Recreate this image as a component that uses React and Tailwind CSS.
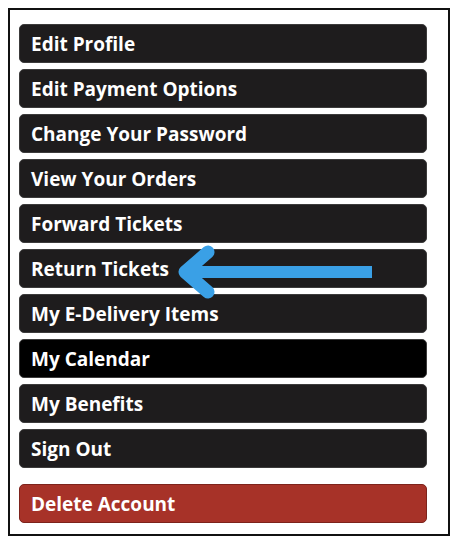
import React from "react";

const items = [
  { label: "Edit Profile", bg: "bg-[#1e1c1d]" },
  { label: "Edit Payment Options", bg: "bg-[#1e1c1d]" },
  { label: "Change Your Password", bg: "bg-[#1e1c1d]" },
  { label: "View Your Orders", bg: "bg-[#1e1c1d]" },
  { label: "Forward Tickets", bg: "bg-[#1e1c1d]" },
  { label: "Return Tickets", bg: "bg-[#1e1c1d]" },
  { label: "My E-Delivery Items", bg: "bg-[#1e1c1d]" },
  { label: "My Calendar", bg: "bg-[#000000]" },
  { label: "My Benefits", bg: "bg-[#1e1c1d]" },
  { label: "Sign Out", bg: "bg-[#1e1c1d]" },
];

export default function App() {
  return (
    <div className="w-[460px] h-[545px] bg-white pt-[8px] pl-[8px]" style={{ fontFamily: '"Open Sans", "Noto Sans", sans-serif' }}>
      <div className="relative w-[442px] h-[528px] border-2 border-[#111] pl-[9px] pr-[21px] pt-[14px]">
        <div className="flex flex-col gap-[6px]">
          {items.map((it) => (
            <div
              key={it.label}
              className={`${it.bg} h-[39px] rounded-[5px] flex items-center pl-[11px] pt-[1px] text-white font-bold text-[19px] leading-none border border-[#3c3b3b]`}
            >
              {it.label}
            </div>
          ))}
        </div>
        <div className="mt-[16px] bg-[#a73228] h-[39px] rounded-[5px] flex items-center pl-[11px] pt-[1px] text-white font-bold text-[19px] leading-none border border-[#7d231c]">
          Delete Account
        </div>
        <svg className="absolute left-[153px] top-[220px]" width="230" height="70" viewBox="0 0 230 70">
          <line x1="24" y1="42" x2="209" y2="42" stroke="#3aa0e6" strokeWidth="12" />
          <polyline points="45,22 22,42 45,62" fill="none" stroke="#3aa0e6" strokeWidth="13" strokeLinecap="round" strokeLinejoin="round" />
        </svg>
      </div>
    </div>
  );
}
